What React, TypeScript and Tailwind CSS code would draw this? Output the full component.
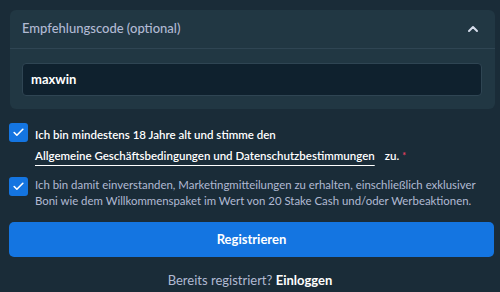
import { Check, ChevronUp } from "lucide-react";

const font = { fontFamily: "Lato, 'Noto Sans', sans-serif" };

const Checkbox = () => (
  <span className="flex h-[19px] w-[19px] shrink-0 items-center justify-center rounded-[3px] bg-[#1475e1]">
    <Check size={13} strokeWidth={3} color="white" />
  </span>
);

export default function App() {
  return (
    <div className="h-[292px] w-[500px] overflow-hidden bg-[#1a2c38] px-[9px] pt-[10px]" style={font}>
      <div className="ml-[1px] mr-[-4px] overflow-hidden rounded-md bg-[#213743]">
        <div className="flex h-[39px] items-center justify-between border-b border-[#2f4553] px-[12px]">
          <span className="text-[13px] font-medium text-[#b1bad3]">Empfehlungscode (optional)</span>
          <ChevronUp size={16} strokeWidth={3} color="#d5dceb" className="mr-[2px]" />
        </div>
        <div className="px-[12px] pb-[13px] pt-[14px]">
          <div className="flex h-[33px] w-[460px] items-center rounded-[4px] border border-[#2f4553] bg-[#0f212e] px-[8px] text-[13px] font-bold text-white">
            maxwin
          </div>
        </div>
      </div>

      <div className="mt-[14px] flex gap-[7px]">
        <Checkbox />
        <div className="pt-[1px] text-[11.5px] font-semibold leading-[21px] text-white">
          <div>Ich bin mindestens 18 Jahre alt und stimme den</div>
          <div>
            <span className="underline decoration-[1px] underline-offset-[5px]">
              Allgemeine Geschäftsbedingungen und Datenschutzbestimmungen
            </span>
            <span className="ml-[10px]">zu.</span>
            <span className="ml-[3px] align-top text-[9px] text-[#ed4163]">*</span>
          </div>
        </div>
      </div>

      <div className="mt-[11px] flex gap-[7px]">
        <Checkbox />
        <div className="whitespace-nowrap text-[11.4px] leading-[16px] text-[#b1bad3]">
          <div>Ich bin damit einverstanden, Marketingmitteilungen zu erhalten, einschließlich exklusiver</div>
          <div>Boni wie dem Willkommenspaket im Wert von 20 Stake Cash und/oder Werbeaktionen.</div>
        </div>
      </div>

      <button className="mt-[13px] flex h-[35px] w-[485px] items-center justify-center rounded-[5px] bg-[#1475e1] text-[13px] font-bold text-white">
        Registrieren
      </button>

      <div className="mt-[14px] text-center text-[13px] text-[#b1bad3]">
        Bereits registriert? <span className="font-bold text-white">Einloggen</span>
      </div>
    </div>
  );
}
